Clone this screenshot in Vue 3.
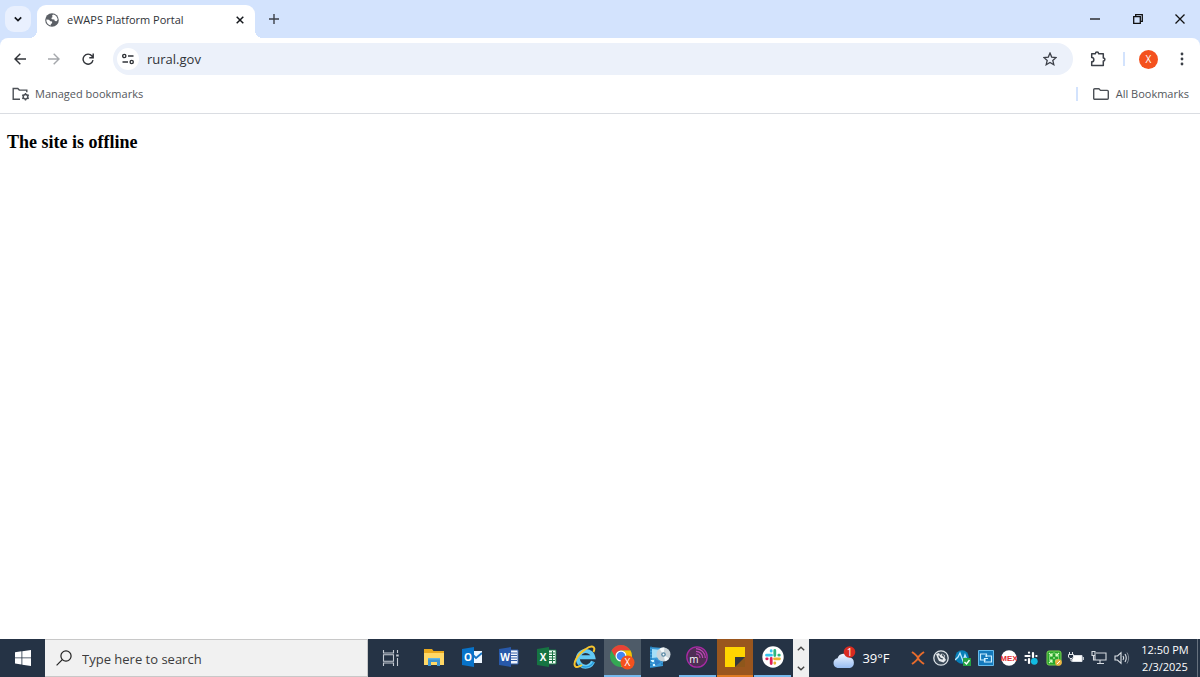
<script setup>
import { ref } from 'vue'

const address = ref('rural.gov')
const query = ref('')
const slackArms = [
  { color: '#36c5f0', angle: 0 },
  { color: '#2eb67d', angle: 90 },
  { color: '#ecb22e', angle: 180 },
  { color: '#e01e5a', angle: 270 },
]
</script>

<template>
  <div class="screen">
    <header class="browser">
      <div class="tabstrip">
        <button class="tab-search" aria-label="Search tabs">
          <svg width="10" height="10" viewBox="0 0 10 10"><path d="M1.8 3.4 5 6.6l3.2-3.2" fill="none" stroke="#15181d" stroke-width="1.7" /></svg>
        </button>
        <div class="tab">
          <svg width="14" height="14" viewBox="0 0 14 14">
            <circle cx="7" cy="7" r="6.8" fill="#5c6066" />
            <path d="M1.300 6.500 4 6.700l1.300 1.500 1.800.3v1.700l-1.300.7v1.700C3 12 1.200 9.600 1.300 6.500ZM8 1.500c2.700.4 4.600 2.600 4.700 5.300l-1.200 1.500-1.700-.3-.5-1.500-2.400-.3-.6-1.200L7.600 4 7 2.800Z" fill="#fff" />
          </svg>
          <span class="tab-title">eWAPS Platform Portal</span>
          <button class="tab-close" aria-label="Close tab">
            <svg width="8" height="8" viewBox="0 0 8 8"><path d="m.7.7 6.600 6.600M7.300.7.7 7.300" stroke="#15181d" stroke-width="1.500" /></svg>
          </button>
        </div>
        <button class="new-tab" aria-label="New tab">
          <svg width="10" height="10" viewBox="0 0 10 10"><path d="M5 0v10M0 5h10" stroke="#3c4048" stroke-width="1.400" /></svg>
        </button>
        <div class="window-controls">
          <button aria-label="Minimize"><svg width="10" height="10" viewBox="0 0 10 10"><path d="M0 5h10" stroke="#111" stroke-width="1.300" /></svg></button>
          <button aria-label="Restore"><svg width="10" height="10" viewBox="0 0 10 10"><path d="M.7 2.700h6.600v6.600H.7zM2.700 2.500V.7h6.600v6.600H7.500" fill="none" stroke="#111" stroke-width="1.300" /></svg></button>
          <button aria-label="Close"><svg width="10" height="10" viewBox="0 0 10 10"><path d="m.5.5 9 9m0-9-9 9" stroke="#111" stroke-width="1.300" /></svg></button>
        </div>
      </div>

      <div class="toolbar">
        <nav class="navigation">
          <button aria-label="Back"><svg width="12" height="12" viewBox="0 0 12 12"><path d="M12 6H1.200M6.300.8 1 6l5.300 5.200" fill="none" stroke="#303338" stroke-width="1.400" /></svg></button>
          <button aria-label="Forward"><svg width="12" height="12" viewBox="0 0 12 12"><path d="M0 6h10.800M5.700.8 11 6l-5.300 5.200" fill="none" stroke="#a5a8ac" stroke-width="1.400" /></svg></button>
          <button aria-label="Reload"><svg width="12" height="12" viewBox="0 0 12 12"><path d="M11 7.200A5 5 0 1 1 10 3l1 1.500M11.200.5v4.200H7.300" fill="none" stroke="#303338" stroke-width="1.400" /></svg></button>
        </nav>
        <div class="omnibox">
          <button class="site-info" aria-label="View site information">
            <svg width="12" height="12" viewBox="0 0 12 12"><g fill="none" stroke="#303338" stroke-width="1.400"><circle cx="2.300" cy="3" r="1.600" /><path d="M6 3h5.500M.5 9H6" /><circle cx="9.700" cy="9" r="1.600" /></g></svg>
          </button>
          <input v-model="address" class="address" aria-label="Address" />
          <button class="star" aria-label="Bookmark this tab">
            <svg width="14" height="14" viewBox="0 0 14 14"><path d="m7 1.100 1.700 4 4.400.4-3.300 2.900 1 4.300L7 10.400l-3.800 2.300 1-4.300L.9 5.500l4.400-.4Z" fill="none" stroke="#3c4048" stroke-width="1.300" /></svg>
          </button>
        </div>
        <button class="extensions" aria-label="Extensions">
          <svg width="16" height="16" viewBox="0 0 16 16"><path d="M1.700 2.700h3.700a1.500 1.500 0 0 1 3.200 0h4.700v4.200a1.500 1.500 0 0 1 0 3.100v4.500H1.700v-3.700a2.100 2.100 0 0 0 0-4.300Z" fill="none" stroke="#3c4048" stroke-width="1.500" stroke-linejoin="round" /></svg>
        </button>
        <span class="divider"></span>
        <button class="profile" aria-label="Profile">X</button>
        <button class="more" aria-label="More">
          <svg width="4" height="14" viewBox="0 0 4 14"><g fill="#3c4048"><circle cx="2" cy="2" r="1.400" /><circle cx="2" cy="7" r="1.400" /><circle cx="2" cy="12" r="1.400" /></g></svg>
        </button>
      </div>

      <div class="bookmarks">
        <button class="bookmark">
          <svg width="18" height="14" viewBox="0 0 18 14"><path d="M8 12.200H1.200V1.500h4.600l1.500 1.600h7.500v2.200" fill="none" stroke="#4c5056" stroke-width="1.400" /><circle cx="13.500" cy="9.700" r="2.300" fill="none" stroke="#4c5056" stroke-width="1.500" /><g stroke="#4c5056" stroke-width="1.400"><path d="M13.500 5.900v1.500m0 4.600v1.500M10.200 7.800l1.300.8m4 2.300 1.300.7M10.200 11.600l1.300-.7m4-2.300 1.300-.8" /></g></svg>
          <span>Managed bookmarks</span>
        </button>
        <span class="divider push"></span>
        <button class="bookmark all">
          <svg width="16" height="12" viewBox="0 0 16 12"><path d="M1.700.8h4.200l1.600 1.600h6.800a1 1 0 0 1 1 1v6.800a1 1 0 0 1-1 1H1.700a1 1 0 0 1-1-1V1.800a1 1 0 0 1 1-1Z" fill="none" stroke="#4c5056" stroke-width="1.400" /></svg>
          <span>All Bookmarks</span>
        </button>
      </div>
    </header>

    <main class="page">
      <h1>The site is offline</h1>
    </main>

    <footer class="taskbar">
      <button class="start" aria-label="Start">
        <svg width="16" height="16" viewBox="0 0 16 16"><path d="m0 2.200 6.500-.9v6.200H0zm7.300-1L16 0v7.500H7.300zM0 8.300h6.500v6.200L0 13.600zm7.300 0H16V16l-8.700-1.300z" fill="#fff" /></svg>
      </button>
      <label class="search">
        <svg width="16" height="16" viewBox="0 0 16 16"><circle cx="10" cy="6" r="5.100" fill="none" stroke="#222" stroke-width="1.200" /><path d="M6.300 9.700.6 15.400" stroke="#222" stroke-width="1.200" /></svg>
        <input v-model="query" placeholder="Type here to search" aria-label="Search" />
      </label>
      <button class="task-view" aria-label="Task view">
        <svg width="17" height="16" viewBox="0 0 17 16"><g fill="none" stroke="#c5cbd3" stroke-width="1.100"><path d="M1.500 0v3h10V0M1.500 16v-3h10v3M1.500 4.800h10v6.400h-10zM15.500 0v3m0 5v8" /><path d="M14.200 5.500h2.500" stroke-width="2" /></g></svg>
      </button>
      <nav class="apps">
        <button aria-label="File Explorer">
          <svg width="22" height="18" viewBox="0 0 22 18"><path d="M1 1h8l1.500 2H21v13H1z" fill="#e9a91e" /><path d="M1 5h20v12H1z" fill="#ffd866" /><path d="M5 10.500h12V18h-3v-4H8v4H5z" fill="#3d93cf" /><path d="M5 10h12v1.500H5z" fill="#5fb4e5" /></svg>
        </button>
        <button aria-label="Outlook">
          <svg class="office" width="20" height="20" viewBox="0 0 20 20"><path d="M9 4h11v12H9z" fill="#eef7ff" /><path d="m11 8 3 3 6-5" fill="none" stroke="#1674c4" stroke-width="1.800" /><path d="m0 2 12-2v20L0 18z" fill="#0873c9" /><text x="6" y="14" fill="#fff" text-anchor="middle">O</text></svg>
        </button>
        <button aria-label="Word">
          <svg class="office" width="20" height="20" viewBox="0 0 20 20"><path d="M10 3h9v14h-9z" fill="#f1f5fc" stroke="#315ca7" /><path d="M12 6h6m-6 2.500h6M12 11h6m-6 2.500h6" stroke="#315ca7" /><path d="m0 2 12-2v20L0 18z" fill="#2859aa" /><text x="6" y="14" fill="#fff" text-anchor="middle">W</text></svg>
        </button>
        <button aria-label="Excel">
          <svg class="office" width="20" height="20" viewBox="0 0 20 20"><path d="M10 3h9v14h-9z" fill="#f2fff6" stroke="#187344" /><path d="M12 6h6m-6 2.500h6M12 11h6m-6 2.500h6M15.500 4v12" stroke="#187344" /><path d="m0 2 12-2v20L0 18z" fill="#167442" /><text x="6" y="14" fill="#fff" text-anchor="middle">X</text></svg>
        </button>
        <button aria-label="Internet Explorer">
          <svg width="24" height="24" viewBox="0 0 24 24"><path d="M20 16.500A7.800 7.800 0 1 1 20.300 12.200H7" fill="none" stroke="#62c9f5" stroke-width="4" /><path d="M20.500 17A8.800 8.800 0 0 1 6 19" fill="none" stroke="#2499dc" stroke-width="1.500" /><path d="M20.500 7c2.800-6-2-7-8-2.800C4 9.500.2 18 2 21c1.200 2 4.500.7 7-1" fill="none" stroke="#f7c52e" stroke-width="2" /></svg>
        </button>
        <button class="active open" aria-label="Chrome">
          <svg class="badge-text" width="26" height="26" viewBox="0 0 26 26"><circle cx="12" cy="12" r="11" fill="#34a853" /><path d="M2.500 6.500A11 11 0 0 1 21.500 6.500H12a5.500 5.500 0 0 0-4.800 8.200Z" fill="#e94235" /><path d="M21.500 6.500A11 11 0 0 1 12 23l4.800-8.200A5.500 5.500 0 0 0 12 6.500Z" fill="#fbbc05" /><circle cx="12" cy="12" r="5.500" fill="#fff" /><circle cx="12" cy="12" r="4.300" fill="#4285f4" /><circle cx="18.500" cy="18.500" r="7" fill="#f4511e" /><text x="18.500" y="22" fill="#fff" text-anchor="middle">X</text></svg>
        </button>
        <button aria-label="Disc manager">
          <svg width="24" height="22" viewBox="0 0 24 22"><path d="m2 1 13 1v18L2 22z" fill="#3c9bd8" /><path d="m4 3 9 1v7l-9 1z" fill="#a4def8" /><path d="M3 14h3v2H3zm5 1h3v2H8zM5 18h3v2H5z" fill="#d5f5ff" /><path d="M3 0v22M14 2v18" stroke="#176fab" stroke-dasharray="2 1" /><circle cx="15.500" cy="8.500" r="7" fill="#cad4d9" /><path d="m15.500 8.500-4-5.600a7 7 0 0 1 5-1.300ZM15.500 8.500l5.500 4a7 7 0 0 1-4 2.800Z" fill="#f5fafb" /><circle cx="15.500" cy="8.500" r="2.300" fill="#5889a4" /><circle cx="15.500" cy="8.500" r="1" fill="#fff" /><path d="m7 13 6 3-6 4z" fill="#327fc6" /></svg>
        </button>
        <button class="open" aria-label="Media monitor">
          <svg class="m-mark" width="22" height="22" viewBox="0 0 22 22"><circle cx="11" cy="11" r="10.200" fill="#4f2d54" stroke="#a82aa4" stroke-width="1.300" /><g fill="none" stroke="#bd4bb7" stroke-width="1.200"><path d="M10 8a4 4 0 0 1 4 4M10 5.300A6.700 6.700 0 0 1 16.700 12M10 2.700a9.300 9.300 0 0 1 9.300 9.300" /></g><text x="8" y="17" fill="#fff" text-anchor="middle">m</text></svg>
        </button>
        <button class="notes open" aria-label="Sticky Notes">
          <svg width="20" height="20" viewBox="0 0 20 20"><path d="M0 0h20v10L10 20H0z" fill="#ffd500" /><path d="M10 10h10v10H10z" fill="#8e571b" /><path d="M10 10h10L10 20z" fill="#34383c" /></svg>
        </button>
        <button class="open" aria-label="Slack">
          <svg width="22" height="22" viewBox="0 0 22 22"><circle cx="11" cy="11" r="10.700" fill="#fff" /><g v-for="arm in slackArms" :key="arm.angle" :transform="`rotate(${arm.angle} 11 11)`" :stroke="arm.color" stroke-width="2.800" stroke-linecap="round"><path d="M4.500 9.200h5M9.200 4.700v.5" /></g></svg>
        </button>
      </nav>
      <div class="scroller">
        <button aria-label="Scroll up"><svg width="8" height="5" viewBox="0 0 8 5"><path d="m.8 4.300 3.200-3 3.200 3" fill="none" stroke="#444" stroke-width="1.400" /></svg></button>
        <button aria-label="Scroll down"><svg width="8" height="5" viewBox="0 0 8 5"><path d="m.8.7 3.200 3 3.200-3" fill="none" stroke="#444" stroke-width="1.400" /></svg></button>
      </div>
      <button class="weather">
        <svg class="alert" width="24" height="24" viewBox="0 0 24 24"><defs><linearGradient id="cloud" x2="0" y2="1"><stop stop-color="#f2f7ff" /><stop offset="1" stop-color="#97bdf2" /></linearGradient></defs><path d="M5.500 22a5 5 0 0 1 0-9.800 6.500 6.500 0 0 1 12-1A5.600 5.600 0 0 1 18 22Z" fill="url(#cloud)" /><circle cx="17.500" cy="6" r="5.800" fill="#d92b20" /><text x="17.500" y="10" fill="#fff" text-anchor="middle">1</text></svg>
        <span>39°F</span>
      </button>
      <div class="tray">
        <button aria-label="Remote tools"><svg width="14" height="14" viewBox="0 0 14 14"><path d="M1 1q5 3.500 6 6 1-2.500 6-6M1 13q5-3.500 6-6 1 2.500 6 6" fill="none" stroke="#e86c2c" stroke-width="2" /></svg></button>
        <button aria-label="Monitor"><svg width="16" height="16" viewBox="0 0 16 16"><circle cx="8" cy="8" r="7.200" fill="#394756" stroke="#dce2e7" stroke-width="1.300" /><path d="m3 4 3-1 1 2 2-1.500 3 2-.5 2L13 10l-2.500 2.500L6 11 4.500 8Z" fill="#e7eaed" /><path d="M6 5.500q0 3 4 3.500M9 4.500l2 2" fill="none" stroke="#394756" stroke-width="1.200" /></svg></button>
        <button aria-label="Network monitor"><svg width="16" height="16" viewBox="0 0 16 16"><circle cx="7" cy="7" r="6.800" fill="#087fb8" /><path d="m0 10 3-3 2-4 3 8 2-6 2 5" fill="none" stroke="#bfeaff" stroke-width="1.300" /><path d="M8 8h8v8H8z" fill="#25a345" /><path d="m9.500 12 2 2 3-4" fill="none" stroke="#fff" stroke-width="1.400" /></svg></button>
        <button aria-label="Remote desktop"><svg width="16" height="16" viewBox="0 0 16 16"><path d="M.5.500h15v15H.5z" fill="#1479bc" stroke="#65bbec" /><path d="M8 10H2.500V4h6v3M7 6h6.500v6H6.500V8.500H10" fill="none" stroke="#cceeff" stroke-width="1.200" /></svg></button>
        <button aria-label="MEX"><svg class="mex" width="16" height="16" viewBox="0 0 16 16"><circle cx="8" cy="8" r="7.700" fill="#fff" /><text x="8" y="11" fill="#e12b30" text-anchor="middle">MEX</text></svg></button>
        <button aria-label="Slack notifications"><svg width="14" height="14" viewBox="0 0 14 14"><g stroke="#fff" stroke-width="2.200" stroke-linecap="round"><path d="M1.500 5h4M5 1.500v.2M9 2v4M12.500 5h-.2M5 8v4M1.500 9h.2" /></g><circle cx="10.300" cy="10.300" r="3.400" fill="#12bce2" /></svg></button>
        <button aria-label="Sync status"><svg width="16" height="16" viewBox="0 0 16 16"><rect x="1" y="1" width="14" height="14" rx="2" fill="#28a52c" stroke="#7bd451" /><path d="m3 3 3 3M3 6h3V3m7 0-3 3m0-3v3h3M3 13l3-3m-3 0h3v3m4-1v-2h3M7.500 3h1M3 8h1m3 0h2m3 0h1" fill="none" stroke="#dcffc4" stroke-width="1.100" /><circle cx="12.500" cy="12.500" r="3.300" fill="#edb343" /><path d="m11 14 3-3" stroke="#fff" /></svg></button>
        <button aria-label="Battery"><svg width="16" height="12" viewBox="0 0 16 12"><path d="M6 3.500h8v6H4.500V7" fill="#fff" stroke="#dbe0e6" /><path d="M15.300 5v3M1.500 0v2m3-2v2M.5 2.500h5V5L4 6.500H2L.5 5ZM3 6.500V9h1.500" fill="none" stroke="#e2e6ea" stroke-width="1" /></svg></button>
        <button aria-label="Network"><svg width="16" height="14" viewBox="0 0 16 14"><path d="M5 2h10v7H4V5M9 9v3m-3 .5h7M1 .5h3v4H1zm1.500 4V9H4" fill="none" stroke="#d5dae0" stroke-width="1.100" /></svg></button>
        <button aria-label="Volume"><svg width="16" height="14" viewBox="0 0 16 14"><path d="M1 5h2.500L7 1.700v10.600L3.500 9H1zM9 5q1.500 2 0 4m2-6q2.500 4 0 8" fill="none" stroke="#dee3e8" stroke-width="1.100" /><path d="M13 1.500q3.300 5.500 0 11" fill="none" stroke="#818b96" /></svg></button>
      </div>
      <button class="clock"><span>12:50 PM</span><span>2/3/2025</span></button>
      <button class="show-desktop" aria-label="Show desktop"></button>
    </footer>
  </div>
</template>

<style>
body { margin: 0; }
</style>

<style scoped>
.screen {
  min-height: 100vh;
  display: flex;
  flex-direction: column;
  background: #fff;
  font-family: "Open Sans", "Noto Sans", sans-serif;
  font-size: 12px;
  color: #303338;
}
.screen * { box-sizing: border-box; }
button, input { font: inherit; color: inherit; border: 0; background: none; padding: 0; margin: 0; min-width: 0; outline: 0; }
button { display: flex; align-items: center; justify-content: center; flex: none; }
svg { display: block; flex: none; }

.browser { background: #d3e3fd; border-bottom: 1px solid #dadde2; }
.tabstrip { display: flex; height: 38px; align-items: stretch; padding-left: 5px; }
.tab-search { width: 26px; height: 26px; margin: 6px 6px 0 0; border-radius: 9px; background: #e9f0fe; }
.tab { position: relative; display: flex; align-items: center; width: 218px; margin-top: 5px; padding: 0 11px 4px 8px; background: #fff; border-radius: 9px 9px 0 0; }
.tab::before, .tab::after { content: ""; position: absolute; bottom: 0; width: 8px; height: 8px; }
.tab::before { left: -8px; background: radial-gradient(circle at 0 0, transparent 8px, #fff 8px); }
.tab::after { right: -8px; background: radial-gradient(circle at 100% 0, transparent 8px, #fff 8px); }
.tab-title { flex: 1; margin-left: 8px; font-size: 11px; white-space: nowrap; }
.tab-close { width: 8px; height: 16px; }
.new-tab { width: 38px; }
.window-controls { display: flex; margin-left: auto; }
.window-controls button { width: 43px; }
.window-controls button:last-child { width: 41px; }

.toolbar { display: flex; align-items: center; height: 42px; background: #fff; border-radius: 8px 8px 0 0; padding: 0 10px 0 3px; }
.navigation { display: flex; width: 110px; }
.navigation button { width: 34px; height: 32px; }
.omnibox { display: flex; align-items: center; flex: 1; height: 32px; border-radius: 16px; background: #ecf1fa; padding: 0 16px 0 4px; }
.site-info { width: 22px; height: 22px; border-radius: 50%; background: #fff; }
.address { flex: 1; margin-left: 8px; font-size: 13px; }
.extensions { width: 50px; height: 32px; }
.divider { width: 2px; height: 14px; background: #d3e3fd; }
.profile { width: 19px; height: 19px; margin-left: 14px; border-radius: 50%; background: #f4511e; color: #fff; font-size: 10px; }
.more { width: 16px; height: 32px; margin-left: 16px; }

.bookmarks { display: flex; align-items: center; height: 33px; padding: 0 11px 6px 12px; background: #fff; font-size: 11px; color: #54575c; }
.bookmark { gap: 5px; white-space: nowrap; }
.push { margin-left: auto; }
.all { margin-left: 15px; gap: 7px; }

.page { flex: 1; padding: 18px 7px; }
h1 { margin: 0; font: bold 18px/20px "Liberation Serif", serif; color: #000; }

.taskbar { display: flex; height: 38px; background: #253345; color: #fff; }
.start { width: 45px; }
.search { display: flex; align-items: center; flex: 1; min-width: 0; padding-left: 11px; gap: 10px; background: #f1f1f1; border: 1px solid #c8c8c8; border-left: 0; }
.search input { flex: 1; font-size: 13px; padding-top: 2px; color: #333; }
.search input::placeholder { color: #3c3c3c; opacity: 1; }
.task-view { width: 44px; }
.apps { display: grid; grid-template-columns: repeat(10, 1fr); flex: none; width: 376px; margin: 0 1px 0 4px; }
.apps button { margin-right: 1px; border-bottom: 2px solid transparent; }
.apps .open { border-bottom-color: #76b9ed; }
.apps .active { background: #4e5b68; }
.apps .notes { background: #9a561e; border-bottom-color: #e07b22; }
.office { font: bold 10px "Open Sans", sans-serif; }
.badge-text, .alert { font: 10px "Open Sans", sans-serif; }
.m-mark { font: 10px "Open Sans", sans-serif; }
.mex { font: bold 8px "Liberation Sans", sans-serif; }
.scroller { display: flex; flex-direction: column; justify-content: space-between; flex: none; width: 16px; background: #f0f0f0; padding: 1px 0; }
.scroller button { height: 16px; }
.weather { width: 98px; gap: 6px; padding-left: 6px; font-size: 13px; }
.tray { display: grid; grid-template-columns: repeat(10, 1fr); flex: none; width: 226px; }
.clock { width: 64px; flex-direction: column; font-size: 11px; line-height: 17px; white-space: nowrap; }
.show-desktop { width: 3px; border-left: 1px solid #66717e; }
</style>
